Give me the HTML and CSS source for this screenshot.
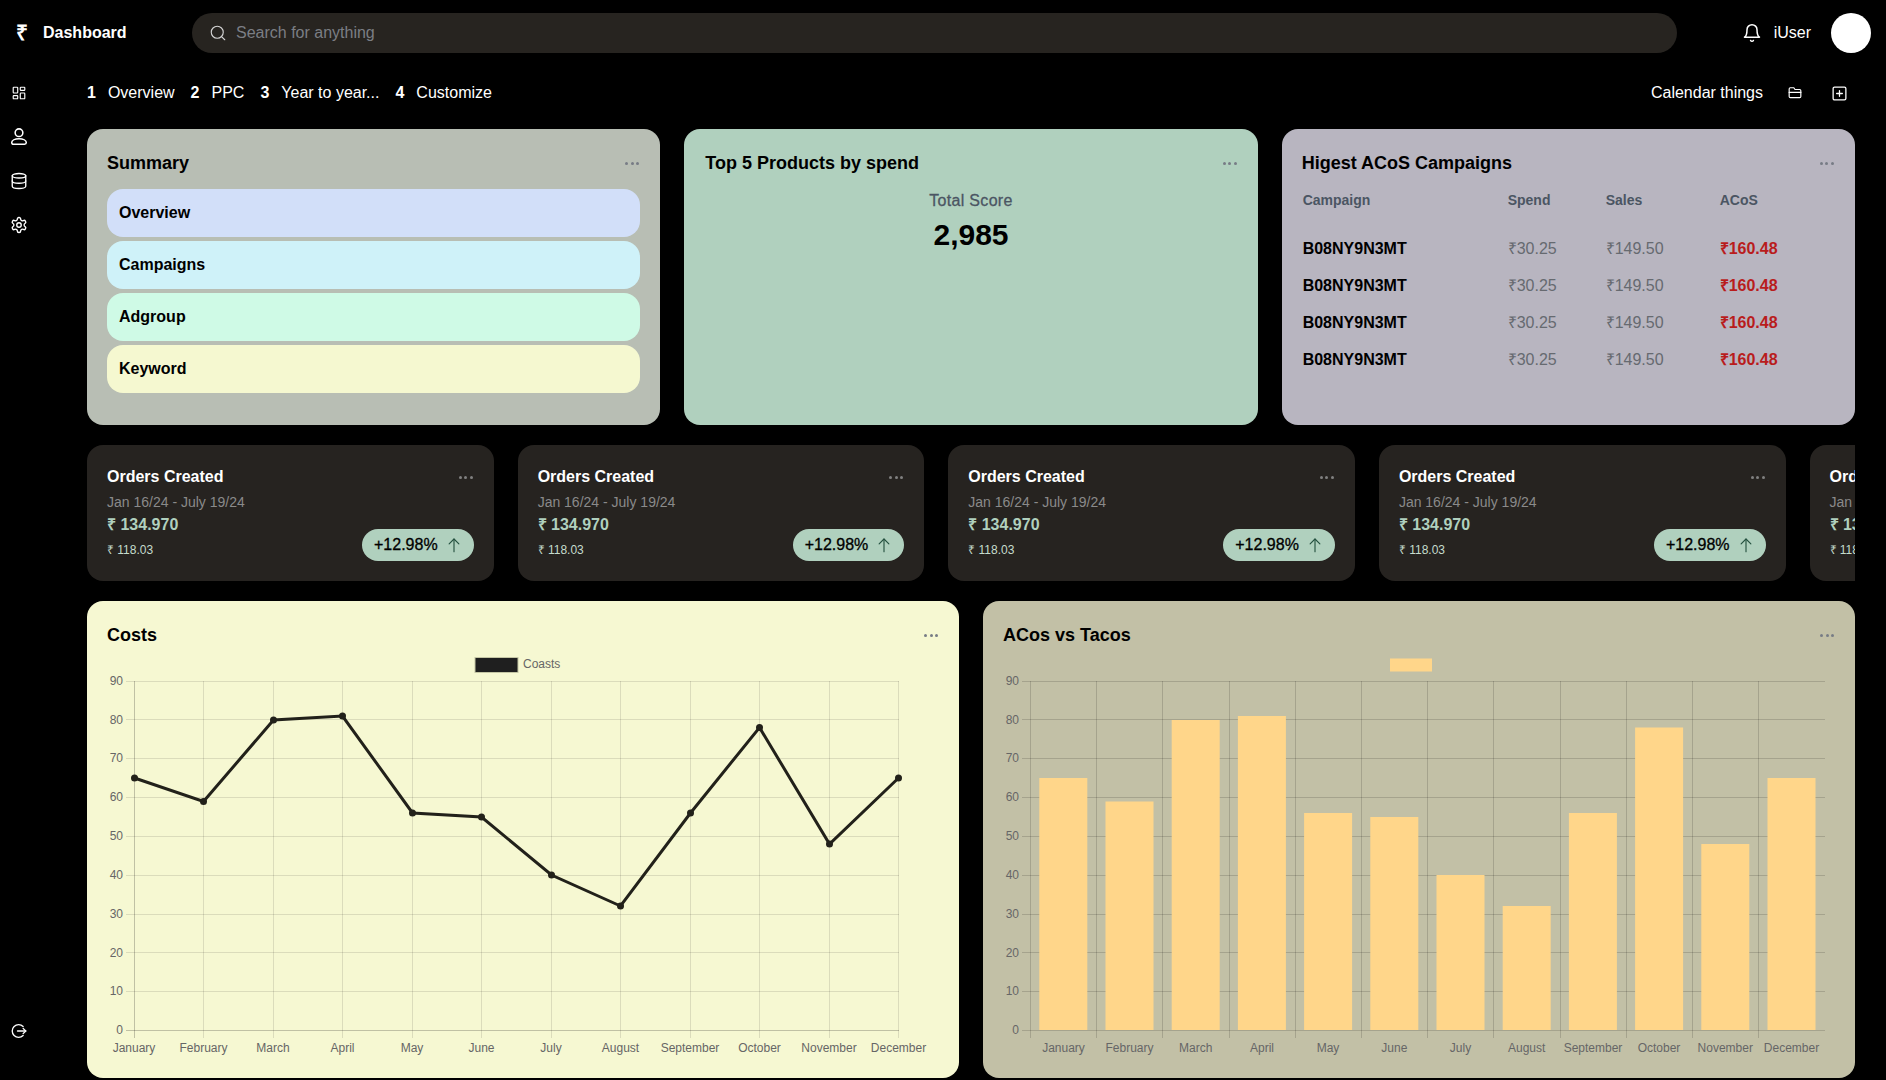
FILE: index.html
```html
<!DOCTYPE html>
<html lang="en">
<head>
  <meta charset="UTF-8">
  <title>Dashboard</title>
  <link rel="stylesheet" href="styles.css">
</head>
<body>

<!-- Top bar -->
<header class="topbar">
  <div class="brand">
    <span class="brand-mark">₹</span>
    <span class="brand-name">Dashboard</span>
  </div>
  <div class="search">
    <svg class="icon search-icon" viewBox="0 0 24 24"><circle cx="11" cy="11" r="8"/><path d="m21 21-4.300-4.300"/></svg>
    <span>Search for anything</span>
  </div>
  <div class="user">
    <svg class="icon bell" viewBox="0 0 24 24"><path d="M6 8a6 6 0 0 1 12 0c0 7 3 9 3 9H3s3-2 3-9"/><path d="M10.300 21a1.940 1.940 0 0 0 3.400 0"/></svg>
    <span class="user-name">iUser</span>
    <span class="avatar"></span>
  </div>
</header>

<div class="layout">
  <!-- Side icons -->
  <nav class="sidebar">
    <svg class="icon side-icon" viewBox="-2 -2 28 28"><rect x="3" y="3" width="7" height="9" rx="1"/><rect x="14" y="3" width="7" height="5" rx="1"/><rect x="14" y="12" width="7" height="9" rx="1"/><rect x="3" y="16" width="7" height="5" rx="1"/></svg>
    <svg class="icon side-icon" viewBox="1.500 1.500 21 21"><circle cx="12" cy="7" r="4.500"/><path d="M3.500 18.500c0-2.600 3.600-4.500 8.500-4.500s8.500 1.900 8.500 4.500c0 1.300-.8 2-2 2h-13c-1.200 0-2-.7-2-2z"/></svg>
    <svg class="icon side-icon" viewBox="0 0 24 24"><ellipse cx="12" cy="5" rx="9" ry="3"/><path d="M3 5v14c0 1.700 4 3 9 3s9-1.300 9-3V5"/><path d="M3 12c0 1.700 4 3 9 3s9-1.300 9-3"/></svg>
    <svg class="icon side-icon" viewBox="0 0 24 24"><path d="M12.220 2h-.44a2 2 0 0 0-2 2v.18a2 2 0 0 1-1 1.730l-.43.25a2 2 0 0 1-2 0l-.15-.08a2 2 0 0 0-2.730.73l-.22.38a2 2 0 0 0 .73 2.730l.15.1a2 2 0 0 1 1 1.720v.51a2 2 0 0 1-1 1.740l-.15.09a2 2 0 0 0-.73 2.730l.22.38a2 2 0 0 0 2.730.73l.15-.08a2 2 0 0 1 2 0l.43.25a2 2 0 0 1 1 1.730V20a2 2 0 0 0 2 2h.44a2 2 0 0 0 2-2v-.18a2 2 0 0 1 1-1.730l.43-.25a2 2 0 0 1 2 0l.15.08a2 2 0 0 0 2.730-.73l.22-.39a2 2 0 0 0-.73-2.730l-.15-.08a2 2 0 0 1-1-1.740v-.5a2 2 0 0 1 1-1.740l.15-.09a2 2 0 0 0 .73-2.730l-.22-.38a2 2 0 0 0-2.730-.73l-.15.08a2 2 0 0 1-2 0l-.43-.25a2 2 0 0 1-1-1.730V4a2 2 0 0 0-2-2z"/><circle cx="12" cy="12" r="3"/></svg>
    <svg class="icon side-icon logout" viewBox="0 0 24 24"><path d="M17.500 6A8.500 8.500 0 1 0 17.500 18"/><path d="M10 12h11"/><path d="m17.500 8.500 3.500 3.500-3.500 3.500"/></svg>
  </nav>

  <main class="content">
    <!-- Tabs -->
    <div class="tabs">
      <div class="tab-list">
        <span class="tab"><b>1</b>Overview</span>
        <span class="tab"><b>2</b>PPC</span>
        <span class="tab"><b>3</b>Year to year...</span>
        <span class="tab"><b>4</b>Customize</span>
      </div>
      <div class="tab-tools">
        <span>Calendar things</span>
        <svg class="icon tool-folder" viewBox="0 0 24 24"><path d="M4 20h16a2 2 0 0 0 2-2V8a2 2 0 0 0-2-2h-8L10 3H4a2 2 0 0 0-2 2v13a2 2 0 0 0 2 2z"/><path d="M2 11h20"/></svg>
        <svg class="icon tool-plus" viewBox="0 0 24 24"><rect x="3" y="3" width="18" height="18" rx="2"/><path d="M12 8v8"/><path d="M8 12h8"/></svg>
      </div>
    </div>

    <!-- Top cards -->
    <section class="row-top">
      <div class="card card-summary">
        <div class="card-head">
          <h3>Summary</h3>
          <span class="dots"><i></i><i></i><i></i></span>
        </div>
        <div class="summary-list">
          <div class="summary-item item-blue">Overview</div>
          <div class="summary-item item-cyan">Campaigns</div>
          <div class="summary-item item-green">Adgroup</div>
          <div class="summary-item item-yellow">Keyword</div>
        </div>
      </div>

      <div class="card card-products">
        <div class="card-head">
          <h3>Top 5 Products by spend</h3>
          <span class="dots"><i></i><i></i><i></i></span>
        </div>
        <div class="score">
          <div class="score-label">Total Score</div>
          <div class="score-value">2,985</div>
        </div>
      </div>

      <div class="card card-acos">
        <div class="card-head">
          <h3>Higest ACoS Campaigns</h3>
          <span class="dots"><i></i><i></i><i></i></span>
        </div>
        <table class="acos-table">
          <thead>
            <tr><th>Campaign</th><th>Spend</th><th>Sales</th><th>ACoS</th></tr>
          </thead>
          <tbody>
            <tr><td class="asin">B08NY9N3MT</td><td>₹30.25</td><td>₹149.50</td><td class="red">₹160.48</td></tr>
            <tr><td class="asin">B08NY9N3MT</td><td>₹30.25</td><td>₹149.50</td><td class="red">₹160.48</td></tr>
            <tr><td class="asin">B08NY9N3MT</td><td>₹30.25</td><td>₹149.50</td><td class="red">₹160.48</td></tr>
            <tr><td class="asin">B08NY9N3MT</td><td>₹30.25</td><td>₹149.50</td><td class="red">₹160.48</td></tr>
          </tbody>
        </table>
      </div>
    </section>

    <!-- Orders strip -->
    <section class="row-stats">
      <div class="stat">
        <div class="stat-head"><h4>Orders Created</h4><span class="dots"><i></i><i></i><i></i></span></div>
        <div class="stat-date">Jan 16/24 - July 19/24</div>
        <div class="stat-foot">
          <div><div class="stat-value">₹ 134.970</div><div class="stat-small">₹ 118.03</div></div>
          <div class="pill">+12.98%<svg class="icon arrow" viewBox="0 0 24 24"><path d="M12 21V4"/><path d="m5.500 10.500 6.500-6.500 6.500 6.500"/></svg></div>
        </div>
      </div>
      <div class="stat">
        <div class="stat-head"><h4>Orders Created</h4><span class="dots"><i></i><i></i><i></i></span></div>
        <div class="stat-date">Jan 16/24 - July 19/24</div>
        <div class="stat-foot">
          <div><div class="stat-value">₹ 134.970</div><div class="stat-small">₹ 118.03</div></div>
          <div class="pill">+12.98%<svg class="icon arrow" viewBox="0 0 24 24"><path d="M12 21V4"/><path d="m5.500 10.500 6.500-6.500 6.500 6.500"/></svg></div>
        </div>
      </div>
      <div class="stat">
        <div class="stat-head"><h4>Orders Created</h4><span class="dots"><i></i><i></i><i></i></span></div>
        <div class="stat-date">Jan 16/24 - July 19/24</div>
        <div class="stat-foot">
          <div><div class="stat-value">₹ 134.970</div><div class="stat-small">₹ 118.03</div></div>
          <div class="pill">+12.98%<svg class="icon arrow" viewBox="0 0 24 24"><path d="M12 21V4"/><path d="m5.500 10.500 6.500-6.500 6.500 6.500"/></svg></div>
        </div>
      </div>
      <div class="stat">
        <div class="stat-head"><h4>Orders Created</h4><span class="dots"><i></i><i></i><i></i></span></div>
        <div class="stat-date">Jan 16/24 - July 19/24</div>
        <div class="stat-foot">
          <div><div class="stat-value">₹ 134.970</div><div class="stat-small">₹ 118.03</div></div>
          <div class="pill">+12.98%<svg class="icon arrow" viewBox="0 0 24 24"><path d="M12 21V4"/><path d="m5.500 10.500 6.500-6.500 6.500 6.500"/></svg></div>
        </div>
      </div>
      <div class="stat">
        <div class="stat-head"><h4>Orders Created</h4><span class="dots"><i></i><i></i><i></i></span></div>
        <div class="stat-date">Jan 16/24 - July 19/24</div>
        <div class="stat-foot">
          <div><div class="stat-value">₹ 134.970</div><div class="stat-small">₹ 118.03</div></div>
          <div class="pill">+12.98%<svg class="icon arrow" viewBox="0 0 24 24"><path d="M12 21V4"/><path d="m5.500 10.500 6.500-6.500 6.500 6.500"/></svg></div>
        </div>
      </div>
    </section>

    <!-- Charts -->
    <section class="row-charts">
      <div class="card card-costs">
        <div class="card-head">
          <h3>Costs</h3>
          <span class="dots"><i></i><i></i><i></i></span>
        </div>
        <svg class="chart" viewBox="107 649 832 409">
          <rect class="legend-line" x="475" y="657.500" width="43" height="15"/>
          <text x="523" y="668">Coasts</text>
          <path class="grid-soft" d="M126 681.500H899M126 719.500H899M126 758.500H899M126 797.500H899M126 836.500H899M126 875.500H899M126 914.500H899M126 952.500H899M126 991.500H899"/>
          <path class="grid-soft" d="M203.500 681V1038M273.500 681V1038M342.500 681V1038M412.500 681V1038M481.500 681V1038M551.500 681V1038M620.500 681V1038M690.500 681V1038M759.500 681V1038M829.500 681V1038M898.500 681V1038"/>
          <path class="grid-zero" d="M126 1030.500H899M134.500 681V1038"/>
          <g class="y-labels">
            <text x="123" y="684.500">90</text><text x="123" y="723.500">80</text><text x="123" y="762">70</text>
            <text x="123" y="801">60</text><text x="123" y="840">50</text><text x="123" y="879">40</text>
            <text x="123" y="918">30</text><text x="123" y="956.500">20</text><text x="123" y="995">10</text>
            <text x="123" y="1034">0</text>
          </g>
          <g class="x-labels">
            <text x="134" y="1052">January</text><text x="203.500" y="1052">February</text><text x="273" y="1052">March</text>
            <text x="342.500" y="1052">April</text><text x="412" y="1052">May</text><text x="481.500" y="1052">June</text>
            <text x="551" y="1052">July</text><text x="620.500" y="1052">August</text><text x="690" y="1052">September</text>
            <text x="759.500" y="1052">October</text><text x="829" y="1052">November</text><text x="898.500" y="1052">December</text>
          </g>
          <polyline class="cost-line" points="134.500,778 203.500,801.500 273.500,720 342.500,716 412.500,813 481.500,817 551.500,875 620.500,906 690.500,813 759.500,727.500 829.500,844 898.500,778"/>
          <g class="cost-points">
            <circle cx="134.500" cy="778" r="3.500"/><circle cx="203.500" cy="801.500" r="3.500"/><circle cx="273.500" cy="720" r="3.500"/>
            <circle cx="342.500" cy="716" r="3.500"/><circle cx="412.500" cy="813" r="3.500"/><circle cx="481.500" cy="817" r="3.500"/>
            <circle cx="551.500" cy="875" r="3.500"/><circle cx="620.500" cy="906" r="3.500"/><circle cx="690.500" cy="813" r="3.500"/>
            <circle cx="759.500" cy="727.500" r="3.500"/><circle cx="829.500" cy="844" r="3.500"/><circle cx="898.500" cy="778" r="3.500"/>
          </g>
        </svg>
      </div>

      <div class="card card-tacos">
        <div class="card-head">
          <h3>ACos vs Tacos</h3>
          <span class="dots"><i></i><i></i><i></i></span>
        </div>
        <svg class="chart" viewBox="1003 649 832 409">
          <rect class="bar" x="1390" y="658.500" width="42" height="13"/>
          <path class="grid-dark" d="M1022 681.500H1825M1022 719.500H1825M1022 758.500H1825M1022 797.500H1825M1022 836.500H1825M1022 875.500H1825M1022 914.500H1825M1022 952.500H1825M1022 991.500H1825M1022 1030.500H1825"/>
          <path class="grid-dark" d="M1030.500 681V1038M1096.500 681V1038M1162.500 681V1038M1229.500 681V1038M1295.500 681V1038M1361.500 681V1038M1427.500 681V1038M1493.500 681V1038M1560.500 681V1038M1626.500 681V1038M1692.500 681V1038M1758.500 681V1038"/>
          <g class="y-labels">
            <text x="1019" y="684.500">90</text><text x="1019" y="723.500">80</text><text x="1019" y="762">70</text>
            <text x="1019" y="801">60</text><text x="1019" y="840">50</text><text x="1019" y="879">40</text>
            <text x="1019" y="918">30</text><text x="1019" y="956.500">20</text><text x="1019" y="995">10</text>
            <text x="1019" y="1034">0</text>
          </g>
          <g class="x-labels">
            <text x="1063.500" y="1052">January</text><text x="1129.500" y="1052">February</text><text x="1195.700" y="1052">March</text>
            <text x="1262" y="1052">April</text><text x="1328" y="1052">May</text><text x="1394.300" y="1052">June</text>
            <text x="1460.500" y="1052">July</text><text x="1526.700" y="1052">August</text><text x="1593" y="1052">September</text>
            <text x="1659" y="1052">October</text><text x="1725.300" y="1052">November</text><text x="1791.500" y="1052">December</text>
          </g>
          <g class="bar">
            <rect x="1039.300" y="778" width="48" height="252"/><rect x="1105.500" y="801.500" width="48" height="228.500"/>
            <rect x="1171.700" y="720" width="48" height="310"/><rect x="1237.900" y="716" width="48" height="314"/>
            <rect x="1304.100" y="813" width="48" height="217"/><rect x="1370.300" y="817" width="48" height="213"/>
            <rect x="1436.500" y="875" width="48" height="155"/><rect x="1502.700" y="906" width="48" height="124"/>
            <rect x="1568.900" y="813" width="48" height="217"/><rect x="1635.100" y="727.500" width="48" height="302.500"/>
            <rect x="1701.300" y="844" width="48" height="186"/><rect x="1767.500" y="778" width="48" height="252"/>
          </g>
        </svg>
      </div>
    </section>
  </main>
</div>

</body>
</html>
```

FILE: styles.css
```css
* {
  box-sizing: border-box;
}
body {
  margin: 0;
  height: 1080px;
  overflow: hidden;
  background: #000;
  color: #fff;
  font-family: "Liberation Sans", Arial, sans-serif;
  font-size: 16px;
}
h3, h4 {
  margin: 0;
}
.icon {
  fill: none;
  stroke: currentColor;
  stroke-width: 2;
  stroke-linecap: round;
  stroke-linejoin: round;
  flex: none;
}

/* Top bar */
.topbar {
  display: flex;
  align-items: center;
  height: 66px;
  padding-right: 15px;
}
.brand {
  display: flex;
  align-items: center;
  width: 192px;
  padding-left: 16px;
  font-weight: 700;
}
.brand-mark {
  width: 27px;
  font-size: 21px;
  line-height: 24px;
}
.search {
  flex: 1;
  display: flex;
  align-items: center;
  gap: 9px;
  height: 40px;
  padding-left: 17px;
  border-radius: 20px;
  background: #272420;
  color: #7b7e84;
}
.search-icon {
  width: 18px;
  height: 18px;
  stroke-width: 1.5;
  color: #d4d4d4;
}
.user {
  display: flex;
  align-items: center;
  margin-left: 65px;
}
.bell {
  width: 20px;
  height: 20px;
  stroke-width: 1.8;
}
.user-name {
  margin-left: 12px;
}
.avatar {
  width: 40px;
  height: 40px;
  margin-left: 20px;
  border-radius: 50%;
  background: #fff;
}

/* Page */
.layout {
  display: flex;
  height: 1014px;
}
.sidebar {
  width: 87px;
  display: flex;
  flex-direction: column;
  align-items: flex-start;
  gap: 26px;
  padding: 18px 0 0 10px;
}
.side-icon {
  width: 18px;
  height: 18px;
  stroke-width: 1.8;
}
.logout {
  margin-top: auto;
  margin-bottom: 40px;
}
.content {
  width: 1768px;
}
.tabs {
  display: flex;
  align-items: center;
  justify-content: space-between;
  height: 32px;
  margin: 11px 0 20px;
}
.tab-list {
  display: flex;
  gap: 16px;
}
.tab b {
  margin-right: 12px;
}
.tab-tools {
  display: flex;
  align-items: center;
  padding-right: 7.500px;
}
.tool-folder {
  width: 14px;
  height: 14px;
  margin-left: 25px;
}
.tool-plus {
  width: 17px;
  height: 17px;
  margin-left: 28.500px;
  stroke-width: 1.8;
}

/* Cards */
.card {
  padding: 20px;
  border-radius: 16px;
  color: #000;
}
.card-head, .stat-head {
  display: flex;
  align-items: center;
  justify-content: space-between;
  height: 28px;
}
.card-head h3 {
  font-size: 18px;
  font-weight: 700;
}
.dots {
  display: flex;
  gap: 2.500px;
  padding-right: 1px;
}
.dots i {
  width: 3px;
  height: 3px;
  border-radius: 50%;
  background: #777c85;
}
.row-top {
  display: grid;
  grid-template-columns: repeat(3, 1fr);
  gap: 24px;
  height: 296px;
}
.card-summary { background: #b8beb4; }
.card-products { background: #b0d0be; }
.card-acos { background: #b8b5c0; }

.summary-list {
  display: flex;
  flex-direction: column;
  gap: 4px;
  margin-top: 12px;
}
.summary-item {
  display: flex;
  align-items: center;
  height: 48px;
  padding: 0 12px;
  border-radius: 16px;
  font-weight: 700;
}
.item-blue { background: #d2dff9; }
.item-cyan { background: #cff2f9; }
.item-green { background: #cffae6; }
.item-yellow { background: #f5f8d0; }

.card-products .card-head h3 {
  padding-left: 1px;
}
.score {
  margin-top: 12px;
  text-align: center;
}
.score-label {
  color: #4b5563;
  line-height: 24px;
  letter-spacing: 0.3px;
  -webkit-text-stroke: 0.3px #4b5563;
}
.score-value {
  margin-top: 4px;
  font-size: 30px;
  font-weight: 700;
  line-height: 36px;
}

.acos-table {
  width: 100%;
  margin-top: 12px;
  border-collapse: collapse;
  table-layout: fixed;
}
.acos-table th {
  padding: 0 0 0 1px;
  height: 22px;
  font-size: 14px;
  font-weight: 700;
  color: #4b5563;
  text-align: left;
}
.acos-table tbody::before {
  content: "";
  display: block;
  height: 20px;
}
.acos-table td {
  height: 37px;
  padding: 9px 0 0 1px;
  line-height: 18px;
  vertical-align: baseline;
  color: #666a70;
}
.acos-table th:nth-child(1) { width: 205px; }
.acos-table th:nth-child(2) { width: 98px; }
.acos-table th:nth-child(3) { width: 114px; }
.acos-table td.asin {
  font-weight: 700;
  color: #000;
}
.acos-table td.red {
  font-weight: 700;
  color: #b91c1c;
}

/* Orders strip */
.row-stats {
  display: flex;
  gap: 24px;
  height: 136px;
  margin-top: 20px;
  overflow: hidden;
}
.stat {
  flex: 0 0 23%;
  padding: 18px 20px 0;
  border-radius: 16px;
  background: #262320;
}
.stat-head h4 {
  font-size: 16px;
  font-weight: 700;
}
.stat-head .dots i {
  background: #808080;
}
.stat-date {
  margin-top: 1px;
  font-size: 14px;
  line-height: 20px;
  color: #8a8a8a;
}
.stat-foot {
  display: flex;
  align-items: flex-end;
  justify-content: space-between;
  margin-top: 1px;
}
.stat-value {
  font-weight: 700;
  line-height: 24px;
  color: #b0d0be;
}
.stat-small {
  margin: 4px 0 2px;
  font-size: 12px;
  line-height: 18px;
  color: #c5dccd;
}
.pill {
  display: flex;
  align-items: center;
  gap: 7px;
  height: 32px;
  padding: 0 11px 0 12px;
  border-radius: 16px;
  background: #b0d0be;
  color: #000;
  -webkit-text-stroke: 0.3px #000;
}
.arrow {
  width: 18px;
  height: 18px;
  stroke-width: 1.5;
  color: #24503f;
  -webkit-text-stroke: 0;
}

/* Charts */
.row-charts {
  display: grid;
  grid-template-columns: repeat(2, 1fr);
  gap: 24px;
  height: 477px;
  margin-top: 20px;
}
.card-costs { background: #f6f8d2; }
.card-tacos { background: #c2c0a6; }
.chart {
  display: block;
  width: 832px;
  height: 409px;
  font-size: 12px;
  fill: #666;
}
.grid-soft {
  fill: none;
  stroke: rgba(0, 0, 0, 0.11);
}
.grid-zero {
  fill: none;
  stroke: rgba(0, 0, 0, 0.22);
}
.grid-dark {
  fill: none;
  stroke: rgba(0, 0, 0, 0.15);
}
.y-labels text {
  text-anchor: end;
}
.x-labels text {
  text-anchor: middle;
}
.legend-line {
  fill: #1f1f1f;
  stroke: #c4c6a4;
}
.cost-line {
  fill: none;
  stroke: #22211a;
  stroke-width: 3;
}
.cost-points {
  fill: #22211a;
}
.bar {
  fill: #ffd68a;
}
```
